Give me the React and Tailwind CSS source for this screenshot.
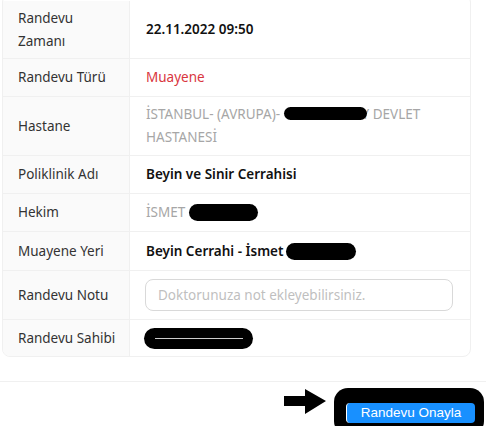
const font = { fontFamily: '"Noto Sans", "Open Sans", Arial, sans-serif' };

function Pill({ w, h, className = '' }) {
  return (
    <span
      className={`relative z-10 inline-block align-middle rounded-full bg-black ${w} ${h} ${className}`}
    />
  );
}

function Row({ label, h, children, last }) {
  return (
    <div className={`flex ${h} ${last ? '' : 'border-b border-[#f0f0f0]'}`}>
      <div className="w-[127px] shrink-0 flex items-center pl-[15px] pr-3 bg-[#fafafa] border-r border-[#f0f0f0] text-[13.5px] leading-[23px] text-[#333]">
        {label}
      </div>
      <div className="flex-1 flex items-center pl-[16px] pr-[16px] text-[13.5px] leading-[23px]">
        {children}
      </div>
    </div>
  );
}

export default function App() {
  return (
    <div className="w-[486px] h-[426px] overflow-hidden bg-white" style={font}>
      <div className="ml-[2px] w-[469px] -mt-[6px] border border-[#f0f0f0] rounded-lg overflow-hidden">
        <Row label={<span>Randevu<br />Zamanı</span>} h="h-[64px] pt-[6px]">
          <span className="font-semibold text-[#111]">22.11.2022 09:50</span>
        </Row>
        <Row label="Randevu Türü" h="h-[38px]">
          <span className="text-[#d9363e]">Muayene</span>
        </Row>
        <Row label="Hastane" h="h-[59px]">
          <span className="text-[#a6a6a6]">
            İSTANBUL- (AVRUPA)-{' '}
            <Pill w="w-[83px]" h="h-[13px]" className="-mr-[5px] -mt-[3px]" />
            Y DEVLET
            <br />
            HASTANESİ
          </span>
        </Row>
        <Row label="Poliklinik Adı" h="h-[38px]">
          <span className="font-semibold text-[#111]">Beyin ve Sinir Cerrahisi</span>
        </Row>
        <Row label="Hekim" h="h-[38px]">
          <span className="text-[#a6a6a6] flex items-center">
            İSMET
            <Pill w="w-[69px]" h="h-[17px]" className="ml-[4px]" />
          </span>
        </Row>
        <Row label="Muayene Yeri" h="h-[39px]">
          <span className="font-semibold text-[#111] flex items-center">
            Beyin Cerrahi - İsmet B
            <Pill w="w-[70px]" h="h-[17px]" className="-ml-[10px]" />
          </span>
        </Row>
        <Row label="Randevu Notu" h="h-[49px]">
          <input
            type="text"
            placeholder="Doktorunuza not ekleyebilirsiniz."
            className="w-[308px] -ml-[1px] h-[32px] rounded-lg border border-[#d9d9d9] px-3 text-[13.5px] outline-none placeholder:text-[#bfbfbf]"
            style={font}
          />
        </Row>
        <Row label="Randevu Sahibi" h="h-[36px]" last>
          <span className="-ml-[2px] relative inline-flex items-center justify-center w-[109px] h-[21px] rounded-full bg-black">
            <span className="block w-[88px] h-px bg-white/80" />
          </span>
        </Row>
      </div>

      <div className="mt-[24px] border-t border-[#f0f0f0] flex justify-end items-start pt-[6px] pr-[2px] gap-[7px]">
        <svg width="44" height="28" viewBox="0 0 44 28">
          <path d="M1 8 H22 V1 L43 13 L22 26 V18 H1 Z" fill="#000" />
        </svg>
        <div className="rounded-[14px] bg-black pt-[11px] pl-[12px] pr-[9px] pb-[12px]">
          <button
            className="w-[129px] h-[20px] rounded-[4px] bg-[#1890ff] border-l border-white text-white text-[13.5px] leading-[20px]"
            style={{ fontFamily: '"Liberation Sans", Arial, sans-serif' }}
          >
            Randevu Onayla
          </button>
        </div>
      </div>
    </div>
  );
}
